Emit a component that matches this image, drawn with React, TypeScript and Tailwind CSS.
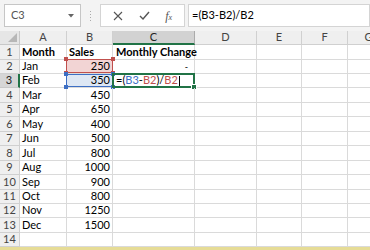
const COLS = ["A", "B", "C", "D", "E", "F", "G"];

const ROWS: [string, string][] = [
  ["Month", "Sales"],
  ["Jan", "250"],
  ["Feb", "350"],
  ["Mar", "450"],
  ["Apr", "650"],
  ["May", "400"],
  ["Jun", "500"],
  ["Jul", "800"],
  ["Aug", "1000"],
  ["Sep", "900"],
  ["Oct", "800"],
  ["Nov", "1250"],
  ["Dec", "1500"],
  ["", ""],
];

const ROW_H = [
  "h-[15px]", "h-[14px]", "h-[14px]", "h-[15px]", "h-[14px]", "h-[15px]", "h-[14px]",
  "h-[15px]", "h-[14px]", "h-[15px]", "h-[14px]", "h-[14px]", "h-[15px]", "h-[14px]",
];

const font = { fontFamily: "Lato, 'Liberation Sans', sans-serif" };

function Corner({ color, pos }: { color: string; pos: string }) {
  return <div className={`absolute w-[4px] h-[4px] ${color} ${pos}`} />;
}

function FormulaText() {
  return (
    <span>
      =(<span className="text-[#3d6fc4]">B3</span>-<span className="text-[#c0504d]">B2</span>)/
      <span className="text-[#c0504d]">B2</span>
      <span className="inline-block w-[1px] h-[11px] bg-black align-middle ml-[1px]" />
    </span>
  );
}

export default function App() {
  return (
    <div className="w-[370px] h-[250px] overflow-hidden bg-white text-[11px] text-black" style={font}>
      {/* formula bar */}
      <div className="h-[31px] bg-[#f3f3f3] flex items-start pt-[4px] pl-[4px]">
        <div className="w-[77px] h-[23px] bg-white border border-[#c6c6c6] flex items-center justify-between pl-[6px] pr-[6px] text-[#555]">
          <span>C3</span>
          <svg width="6" height="4" viewBox="0 0 6 4">
            <path d="M0 0h6L3 3.5z" fill="#666" />
          </svg>
        </div>
        <div className="w-[19px] h-[23px] flex items-center justify-center">
          <div className="flex flex-col gap-[2px]">
            <div className="w-[1px] h-[1px] bg-[#aaa]" />
            <div className="w-[1px] h-[1px] bg-[#aaa]" />
            <div className="w-[1px] h-[1px] bg-[#aaa]" />
            <div className="w-[1px] h-[1px] bg-[#aaa]" />
          </div>
        </div>
        <div className="w-[85px] h-[23px] bg-white border border-[#d4d4d4] flex items-center justify-around px-[4px]">
          <svg width="10" height="10" viewBox="0 0 10 10">
            <path d="M1 1L9 9M9 1L1 9" stroke="#555" strokeWidth="1.1" />
          </svg>
          <svg width="11" height="9" viewBox="0 0 11 9">
            <path d="M1 5l3 3L10 1" stroke="#555" strokeWidth="1.4" fill="none" />
          </svg>
          <span className="text-[#555] italic text-[12px]" style={{ fontFamily: "'Liberation Serif', serif" }}>
            f<span className="text-[8px]">x</span>
          </span>
        </div>
        <div className="ml-[3px] flex-1 h-[23px] bg-white border border-[#d4d4d4] flex items-center pl-[3px]">
          =(B3-B2)/B2
        </div>
      </div>

      {/* sheet */}
      <div className="grid grid-cols-[20px_47px_46px_82px_62px_45px_46px_42px]">
        <div className="h-[14px] bg-[#e6e6e6] border-r border-b border-[#c8c8c8] relative">
          <svg className="absolute right-[2px] bottom-[2px]" width="9" height="9" viewBox="0 0 9 9">
            <path d="M9 0V9H0z" fill="#b7b7b7" />
          </svg>
        </div>
        {COLS.map((c) =>
          c === "C" ? (
            <div
              key={c}
              className="h-[14px] bg-[#d2d2d2] border-r border-[#ababab] border-b-2 border-b-[#217346] flex items-center justify-center text-[#222]"
            >
              {c}
            </div>
          ) : (
            <div
              key={c}
              className="h-[14px] bg-[#efefef] border-r border-b border-[#d0d0d0] flex items-center justify-center text-[#444]"
            >
              {c}
            </div>
          )
        )}

        {ROWS.map(([a, b], i) => {
          const n = i + 1;
          const h = ROW_H[i];
          return [
            n === 3 ? (
              <div
                key={`h${n}`}
                className={`${h} bg-[#d6d6d6] border-b border-[#c8c8c8] border-r-2 border-r-[#217346] flex items-center justify-center text-[#222]`}
              >
                {n}
              </div>
            ) : (
              <div
                key={`h${n}`}
                className={`${h} bg-[#efefef] border-r border-b border-[#d0d0d0] flex items-center justify-center text-[#444]`}
              >
                {n}
              </div>
            ),
            <div key={`a${n}`} className={`${h} border-r border-b border-[#dadada] flex items-center pl-[2px] ${n === 1 ? "font-bold" : ""}`}>
              {a}
            </div>,
            <div
              key={`b${n}`}
              className={`${h} relative border-r border-b border-[#dadada] flex items-center ${
                n === 1 ? "font-bold pl-[2px]" : "justify-end pr-[2px]"
              } ${n === 2 ? "bg-[#f2d4d4]" : ""} ${n === 3 ? "bg-[#dde7f4]" : ""}`}
            >
              {b}
              {n === 2 && (
                <div className="absolute -left-[1px] -top-[1px] -right-[1px] -bottom-[0px] border-[1.5px] border-[#c0504d]">
                  <Corner color="bg-[#c0504d]" pos="-left-[3px] -top-[3px]" />
                  <Corner color="bg-[#c0504d]" pos="-right-[3px] -top-[3px]" />
                  <Corner color="bg-[#c0504d]" pos="-left-[3px] -bottom-[3px]" />
                  <Corner color="bg-[#c0504d]" pos="-right-[3px] -bottom-[3px]" />
                </div>
              )}
              {n === 3 && (
                <div className="absolute -left-[1px] -top-[0px] -right-[1px] -bottom-[0px] border-[1.5px] border-[#3d6fc4]">
                  <Corner color="bg-[#3d6fc4]" pos="-left-[3px] -top-[3px]" />
                  <Corner color="bg-[#3d6fc4]" pos="-right-[3px] -top-[3px]" />
                  <Corner color="bg-[#3d6fc4]" pos="-left-[3px] -bottom-[3px]" />
                  <Corner color="bg-[#3d6fc4]" pos="-right-[3px] -bottom-[3px]" />
                </div>
              )}
            </div>,
            <div
              key={`c${n}`}
              className={`${h} relative border-r border-b border-[#dadada] flex items-center ${
                n === 1 ? "font-bold pl-[2px] whitespace-nowrap" : ""
              } ${n === 2 ? "justify-end pr-[6px]" : "pl-[3px]"}`}
            >
              {n === 1 && "Monthly Change"}
              {n === 2 && <span className="text-[9px] leading-none">-</span>}
              {n === 3 && (
                <>
                  <FormulaText />
                  <div className="absolute -left-[1px] -top-[1px] -right-[1px] -bottom-[1px] border-2 border-[#217346]">
                    <div className="absolute -right-[4px] -bottom-[4px] w-[6px] h-[6px] bg-[#217346] border border-white" />
                  </div>
                </>
              )}
            </div>,
            <div key={`d${n}`} className={`${h} border-r border-b border-[#dadada]`} />,
            <div key={`e${n}`} className={`${h} border-r border-b border-[#dadada]`} />,
            <div key={`f${n}`} className={`${h} border-r border-b border-[#dadada]`} />,
            <div key={`g${n}`} className={`${h} border-r border-b border-[#dadada]`} />,
          ];
        })}
      </div>
      <div className="h-[3px] bg-[#e6dc96]" />
    </div>
  );
}
